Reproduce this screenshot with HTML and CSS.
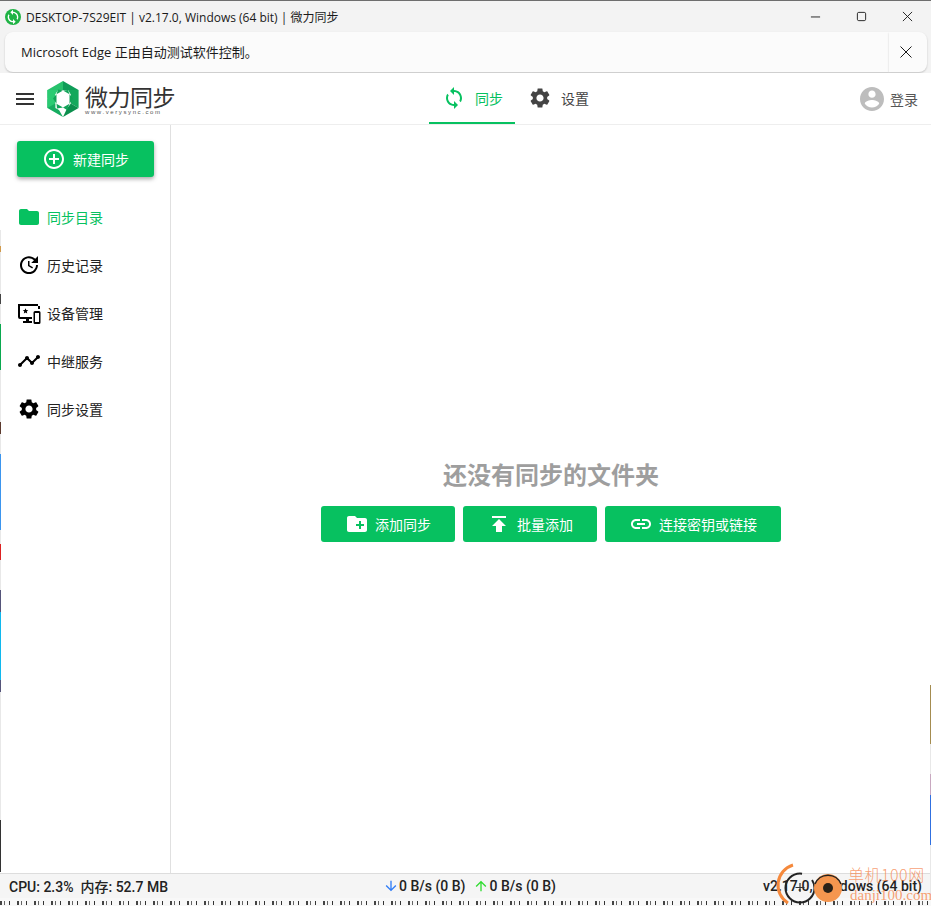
FILE: index.html
```html
<!DOCTYPE html>
<html lang="en">
<head>
    <meta charset="UTF-8">
    <title>微力同步</title>
    <link rel="stylesheet" href="styles.css">
</head>
<body>

<div class="window">
    <!-- Window title bar -->
    <div class="titlebar">
        <svg class="app-icon" viewBox="0 0 24 24"><circle cx="12" cy="12" r="12" fill="#1fb345"/><path fill="#fff" d="M12 4V1L8 5l4 4V6c3.31 0 6 2.69 6 6 0 1.01-.25 1.97-.7 2.8l1.46 1.46C19.54 15.03 20 13.57 20 12c0-4.42-3.58-8-8-8zm0 14c-3.31 0-6-2.69-6-6 0-1.01.25-1.97.7-2.8L5.24 7.74C4.46 8.97 4 10.43 4 12c0 4.42 3.58 8 8 8v3l4-4-4-4v3z"/></svg>
        <span class="title-text">DESKTOP-7S29EIT | v2.17.0, Windows (64 bit) | 微力同步</span>
        <div class="win-controls">
            <svg viewBox="0 0 12 12"><path d="M1 6.5h10" stroke="#1a1a1a" fill="none"/></svg>
            <svg viewBox="0 0 12 12"><rect x="1.5" y="1.5" width="9" height="9" rx="1.5" stroke="#1a1a1a" fill="none"/></svg>
            <svg viewBox="0 0 12 12"><path d="M1 1l10 10M11 1L1 11" stroke="#1a1a1a" fill="none"/></svg>
        </div>
    </div>

    <!-- Automation notice -->
    <div class="infobar">
        <span>Microsoft Edge 正由自动测试软件控制。</span>
        <svg class="infobar-close" viewBox="0 0 12 12"><path d="M.5.5l11 11M11.5.5l-11 11" stroke="#1a1a1a" fill="none"/></svg>
    </div>

    <!-- App header -->
    <header class="appbar">
        <svg class="menu-icon" viewBox="0 0 24 24"><path d="M3 18h18v-2H3v2zm0-5h18v-2H3v2zm0-7v2h18V6H3z"/></svg>
        <div class="logo">
            <svg class="logo-mark" viewBox="0 0 32 36">
                <path fill="#0f9d58" d="M16 0L31.6 9 16 9z"/>
                <path fill="#27c26c" d="M16 0L.4 9v9L11 9h5z"/>
                <path fill="#14a85c" d="M31.6 9v18l-7.800-4.500V13.500L21 9z"/>
                <path fill="#0b8f4d" d="M31.600 27L16 36 20 27.500l3.800-5z"/>
                <path fill="#16ad60" d="M16 36L.4 27v-9l8 4.500v4.500l3.600 2z"/>
                <path fill="#2acb72" d="M.4 9v18l7.800-4.500V13.500L11 9z"/>
                <path fill="#fff" d="M16 9.500l6.500 3.750v9.500L16 26.500l-6.500-3.750v-9.500z"/>
                <path fill="#12a358" d="M22.500 13.250L21 9l-5 .5zM22.500 22.750L26 17.500l-3.500-4.250zM16 26.500l6.500-3.750L20 29zM9.500 22.750L16 26.500l-6 1zM9.500 13.250v9.500L6 17.500zM16 9.500L9.500 13.250 11 8.500z"/>
            </svg>
            <div class="logo-text">
                <div class="logo-name">微力同步</div>
                <div class="logo-url">www.verysync.com</div>
            </div>
        </div>
        <nav class="tabs">
            <div class="tab tab-active">
                <svg viewBox="0 0 24 24"><path d="M12 4V1L8 5l4 4V6c3.31 0 6 2.69 6 6 0 1.01-.25 1.97-.7 2.8l1.46 1.46C19.54 15.03 20 13.57 20 12c0-4.42-3.58-8-8-8zm0 14c-3.31 0-6-2.69-6-6 0-1.01.25-1.97.7-2.8L5.24 7.74C4.46 8.97 4 10.43 4 12c0 4.42 3.58 8 8 8v3l4-4-4-4v3z"/></svg>
                <span>同步</span>
            </div>
            <div class="tab">
                <svg viewBox="0 0 24 24"><path d="M19.14 12.94c.04-.3.06-.61.06-.94 0-.32-.02-.64-.07-.94l2.030-1.580c.18-.14.23-.41.12-.61l-1.920-3.320c-.12-.22-.37-.29-.59-.22l-2.390.96c-.5-.38-1.030-.7-1.620-.94l-.36-2.540c-.04-.24-.24-.41-.48-.41h-3.840c-.24 0-.43.17-.47.41l-.36 2.540c-.59.24-1.130.57-1.620.94l-2.390-.96c-.22-.08-.47 0-.59.22L2.740 8.870c-.12.21-.08.47.12.61l2.030 1.580c-.05.3-.09.63-.09.94s.02.64.07.94l-2.030 1.580c-.18.14-.23.41-.12.61l1.920 3.320c.12.22.37.29.59.22l2.390-.96c.5.38 1.030.7 1.620.94l.36 2.540c.05.24.24.41.48.41h3.840c.24 0 .44-.17.47-.41l.36-2.540c.59-.24 1.130-.56 1.620-.94l2.390.96c.22.08.47 0 .59-.22l1.920-3.320c.12-.22.07-.47-.12-.61l-2.010-1.580zM12 15.600c-1.980 0-3.600-1.620-3.600-3.600s1.620-3.600 3.600-3.600 3.600 1.620 3.600 3.600-1.620 3.600-3.600 3.600z"/></svg>
                <span>设置</span>
            </div>
        </nav>
        <div class="login">
            <svg viewBox="0 0 24 24"><path d="M12 0C5.370 0 0 5.370 0 12s5.370 12 12 12 12-5.370 12-12S18.630 0 12 0zm0 3.600c2 0 3.600 1.600 3.600 3.600S14 10.800 12 10.800 8.400 9.200 8.400 7.200 10 3.600 12 3.600zm0 17c-3 0-5.650-1.540-7.200-3.860.04-2.390 4.800-3.700 7.200-3.700s7.160 1.310 7.200 3.700C17.650 19.060 15 20.600 12 20.600z"/></svg>
            <span>登录</span>
        </div>
    </header>

    <div class="content">
        <!-- Left sidebar -->
        <aside class="sidebar">
            <button class="new-sync">
                <svg viewBox="0 0 24 24"><path d="M13 7h-2v4H7v2h4v4h2v-4h4v-2h-4V7zm-1-5C6.480 2 2 6.480 2 12s4.480 10 10 10 10-4.480 10-10S17.520 2 12 2zm0 18c-4.410 0-8-3.590-8-8s3.590-8 8-8 8 3.590 8 8-3.590 8-8 8z"/></svg>
                新建同步
            </button>
            <ul class="side-menu">
                <li class="side-item side-active">
                    <svg viewBox="0 0 24 24"><path d="M10 4H4c-1.100 0-1.990.9-1.990 2L2 18c0 1.100.9 2 2 2h16c1.100 0 2-.9 2-2V8c0-1.100-.9-2-2-2h-8l-2-2z"/></svg>
                    同步目录
                </li>
                <li class="side-item">
                    <svg viewBox="0 0 24 24"><path d="M21 10.120h-6.780l2.740-2.820c-2.730-2.700-7.150-2.800-9.880-.1-2.730 2.710-2.730 7.080 0 9.790s7.150 2.710 9.880 0C18.320 15.650 19 14.080 19 12.100h2c0 1.980-.88 4.550-2.640 6.290-3.510 3.480-9.210 3.480-12.720 0-3.500-3.470-3.530-9.110-.02-12.580s9.140-3.470 12.650 0L21 3v7.120zM12.500 8v4.250l3.500 2.080-.72 1.210L11 13V8h1.500z"/></svg>
                    历史记录
                </li>
                <li class="side-item">
                    <svg viewBox="0 0 24 24"><path d="M1 3h20v2H3v11h12v2h-3v2h3v2H6v-2h3v-2H3a2 2 0 0 1-2-2zM8.500 7.200l.8 1.900 2 .15-1.550 1.300.5 1.950-1.750-1.050-1.700 1.050.5-1.950-1.550-1.300 2-.15z"/><path fill-rule="evenodd" d="M18 10h4a1.500 1.500 0 0 1 1.500 1.500v10A1.500 1.500 0 0 1 22 23h-4a1.500 1.500 0 0 1-1.500-1.500v-10A1.500 1.500 0 0 1 18 10zm0 2v9h4v-9z"/><path d="M21 5h2v3h-2z"/></svg>
                    设备管理
                </li>
                <li class="side-item">
                    <svg viewBox="0 0 24 24"><path d="M23 8c0 1.100-.9 2-2 2-.18 0-.35-.02-.51-.07l-3.560 3.550c.05.16.07.34.07.52 0 1.100-.9 2-2 2s-2-.9-2-2c0-.18.02-.36.07-.52l-2.550-2.550c-.16.05-.34.07-.52.07s-.36-.02-.52-.07l-4.550 4.560c.05.16.07.33.07.51 0 1.100-.9 2-2 2s-2-.9-2-2 .9-2 2-2c.18 0 .35.02.51.07l4.560-4.550C8.020 9.360 8 9.180 8 9c0-1.100.9-2 2-2s2 .9 2 2c0 .18-.02.36-.07.52l2.550 2.550c.16-.05.34-.07.52-.07s.36.02.52.07l3.550-3.560C19.020 8.350 19 8.180 19 8c0-1.100.9-2 2-2s2 .9 2 2z"/></svg>
                    中继服务
                </li>
                <li class="side-item">
                    <svg viewBox="0 0 24 24"><path d="M19.140 12.940c.04-.3.06-.61.06-.94 0-.32-.02-.64-.07-.94l2.030-1.580c.18-.14.23-.41.12-.61l-1.920-3.320c-.12-.22-.37-.29-.59-.22l-2.390.96c-.5-.38-1.030-.7-1.620-.94l-.36-2.540c-.04-.24-.24-.41-.48-.41h-3.840c-.24 0-.43.17-.47.41l-.36 2.540c-.59.24-1.130.57-1.620.94l-2.390-.96c-.22-.08-.47 0-.59.22L2.740 8.870c-.12.21-.08.47.12.61l2.030 1.580c-.05.3-.09.63-.09.94s.02.64.07.94l-2.030 1.580c-.18.14-.23.41-.12.61l1.920 3.320c.12.22.37.29.59.22l2.390-.96c.5.38 1.030.7 1.620.94l.36 2.540c.05.24.24.41.48.41h3.840c.24 0 .44-.17.47-.41l.36-2.540c.59-.24 1.130-.56 1.620-.94l2.390.96c.22.08.47 0 .59-.22l1.920-3.320c.12-.22.07-.47-.12-.61l-2.010-1.580zM12 15.600c-1.980 0-3.600-1.620-3.600-3.600s1.620-3.600 3.600-3.600 3.600 1.620 3.600 3.600-1.620 3.600-3.600 3.600z"/></svg>
                    同步设置
                </li>
            </ul>
        </aside>

        <!-- Empty state -->
        <main class="main">
            <h2 class="empty-title">还没有同步的文件夹</h2>
            <div class="empty-actions">
                <button class="action-btn btn-add">
                    <svg viewBox="0 0 24 24"><path d="M20 6h-8l-2-2H4c-1.110 0-1.990.89-1.990 2L2 18c0 1.110.89 2 2 2h16c1.110 0 2-.89 2-2V8c0-1.110-.89-2-2-2zm-1 8h-3v3h-2v-3h-3v-2h3V9h2v3h3v2z"/></svg>
                    添加同步
                </button>
                <button class="action-btn btn-batch">
                    <svg viewBox="0 0 24 24"><path d="M5 4v2h14V4H5zm0 10h4v6h6v-6h4l-7-7-7 7z"/></svg>
                    批量添加
                </button>
                <button class="action-btn btn-link">
                    <svg viewBox="0 0 24 24"><path d="M3.900 12c0-1.710 1.390-3.100 3.100-3.100h4V7H7c-2.760 0-5 2.240-5 5s2.240 5 5 5h4v-1.900H7c-1.710 0-3.100-1.390-3.100-3.100zM8 13h8v-2H8v2zm9-6h-4v1.900h4c1.710 0 3.100 1.390 3.100 3.100s-1.390 3.100-3.100 3.100h-4V17h4c2.760 0 5-2.240 5-5s-2.240-5-5-5z"/></svg>
                    连接密钥或链接
                </button>
            </div>
        </main>
    </div>

    <!-- Status bar -->
    <footer class="statusbar">
        <div class="status-left">CPU: 2.3%&nbsp; 内存: 52.7 MB</div>
        <div class="status-center">
            <svg class="arrow-down" viewBox="0 0 24 24"><path d="M20 12l-1.410-1.410L13 16.170V4h-2v12.170l-5.580-5.590L4 12l8 8 8-8z"/></svg>
            <span>0 B/s (0 B)</span>
            <svg class="arrow-up" viewBox="0 0 24 24"><path d="M4 12l1.410 1.410L11 7.830V20h2V7.830l5.580 5.590L20 12l-8-8-8 8z"/></svg>
            <span>0 B/s (0 B)</span>
        </div>
        <div class="status-right">v2.17.0, Windows (64 bit)</div>
    </footer>

    <!-- Bit of the desktop showing under the window -->
    <div class="desktop-strip"></div>
</div>

<!-- Edge of the desktop behind the window -->
<div class="edge-left"></div>
<div class="edge-right"></div>

<!-- Recorder buttons and site watermark on top of the screenshot -->
<div class="recorder">
    <svg viewBox="0 0 80 46" width="80" height="46">
        <path d="M18 5a21 21 0 0 0-5 38" fill="none" stroke="#f5893c" stroke-width="3"/>
        <circle cx="25" cy="28" r="14.500" fill="none" stroke="#222" stroke-width="2" stroke-dasharray="70 12"/>
        <path d="M25 23v9M20.500 27.500h9" stroke="#333" stroke-width="1.200"/>
        <circle cx="53" cy="28" r="14" fill="#f5964f"/>
        <path d="M40 24a14 14 0 0 1 26 0" fill="none" stroke="#222" stroke-width="1.500"/>
        <circle cx="53" cy="28" r="5" fill="#2a2118"/>
    </svg>
</div>
<div class="watermark">
    <div class="wm-name">单机100网</div>
    <div class="wm-url">danji100.com</div>
</div>

</body>
</html>
```

FILE: styles.css
```css
* {
    box-sizing: border-box;
}

html, body {
    margin: 0;
    padding: 0;
    height: 906px;
    overflow: hidden;
}

body {
    font-family: "Noto Sans CJK SC", Roboto, sans-serif;
    background-color: #fff;
    color: #333;
    position: relative;
}

.window {
    height: 906px;
    display: flex;
    flex-direction: column;
    border-top: 1px solid #6e6e6e;
}

/* title bar */
.titlebar {
    height: 31px;
    flex: none;
    background-color: #f3f3f3;
    display: flex;
    align-items: center;
    padding-left: 5px;
    font-family: "Open Sans", "Noto Sans CJK SC", sans-serif;
    font-size: 12px;
    color: #1a1a1a;
}

.app-icon {
    width: 16px;
    height: 16px;
    margin-right: 5px;
}

.win-controls {
    margin-left: auto;
    display: flex;
    gap: 35px;
    padding-right: 18px;
}

.win-controls svg {
    width: 11px;
    height: 11px;
    display: block;
}

/* automation notice */
.infobar {
    height: 41px;
    flex: none;
    background-color: #f3f3f3;
    padding: 0 4px 1px 5px;
    display: flex;
    font-family: "Open Sans", "Noto Sans CJK SC", sans-serif;
    font-size: 13px;
    color: #1a1a1a;
}

.infobar span {
    flex: 1;
    background-color: #fbfbfb;
    border-radius: 8px 0 0 8px;
    box-shadow: 0 1px 2px rgba(0, 0, 0, 0.2);
    line-height: 40px;
    padding-left: 16px;
}

.infobar-close {
    width: 34px;
    height: 40px;
    padding: 14px 11px 14px 11px;
    background-color: #fbfbfb;
    box-shadow: 0 1px 2px rgba(0, 0, 0, 0.2);
    border-radius: 0 8px 8px 0;
    box-sizing: border-box;
    width: 38px;
    padding: 14px 15px 14px 11px;
}

/* app header */
.appbar {
    height: 52px;
    flex: none;
    display: flex;
    align-items: center;
    position: relative;
    background-color: #fff;
    border-bottom: 1px solid #eee;
    padding-left: 13px;
}

.menu-icon {
    width: 24px;
    height: 24px;
    fill: #333;
}

.logo {
    display: flex;
    align-items: center;
    margin-left: 10px;
}

.logo-mark {
    width: 32px;
    height: 36px;
}

.logo-text {
    margin-left: 6px;
    color: #333;
}

.logo-name {
    font-size: 23px;
    line-height: 26px;
    letter-spacing: -0.5px;
}

.logo-url {
    font-size: 6px;
    line-height: 6px;
    letter-spacing: 1.6px;
    color: #555;
    font-family: "Liberation Sans", sans-serif;
    white-space: nowrap;
}

.tabs {
    display: flex;
    height: 51px;
    margin-left: 254px;
}

.tab {
    display: flex;
    align-items: center;
    padding: 0 12px 0 13px;
    font-size: 14px;
    color: #444;
    gap: 9px;
    border-bottom: 2px solid transparent;
}

.tab svg {
    width: 24px;
    height: 24px;
    fill: #444;
}

.tab-active {
    color: #07c160;
    border-bottom-color: #07c160;
}

.tab-active svg {
    fill: #07c160;
}

.login {
    margin-left: auto;
    padding-right: 13px;
    display: flex;
    align-items: center;
    gap: 6px;
    font-size: 14px;
    color: #555;
}

.login svg {
    width: 24px;
    height: 24px;
    fill: #bdbdbd;
}

/* sidebar + main */
.content {
    height: 748px;
    flex: none;
    display: flex;
}

.sidebar {
    width: 171px;
    flex: none;
    border-right: 1px solid #e0e0e0;
    padding-top: 16px;
}

.new-sync {
    width: 137px;
    height: 36px;
    margin-left: 17px;
    display: flex;
    align-items: center;
    justify-content: center;
    gap: 7px;
    background-color: #07c160;
    color: #fff;
    border: none;
    border-radius: 3px;
    box-shadow: 0 2px 4px rgba(0, 0, 0, 0.35);
    font-family: inherit;
    font-size: 14px;
    padding: 0;
}

.new-sync svg {
    width: 24px;
    height: 24px;
    fill: #fff;
}

.side-menu {
    list-style: none;
    margin: 16px 0 0;
    padding: 0;
}

.side-item {
    height: 48px;
    display: flex;
    align-items: center;
    padding-left: 17px;
    gap: 6px;
    font-size: 14px;
    color: #222;
}

.side-item svg {
    width: 24px;
    height: 24px;
    fill: #000;
}

.side-active {
    color: #07c160;
}

.side-active svg {
    fill: #07c160;
}

.main {
    flex: 1;
    display: flex;
    flex-direction: column;
    align-items: center;
    justify-content: center;
}

.empty-title {
    margin: 0 0 15px;
    font-size: 24px;
    line-height: 35px;
    font-weight: 700;
    color: #9e9e9e;
}

.empty-actions {
    display: flex;
    gap: 8px;
}

.action-btn {
    height: 36px;
    display: flex;
    align-items: center;
    justify-content: center;
    gap: 6px;
    background-color: #07c160;
    color: #fff;
    border: none;
    border-radius: 3px;
    font-family: inherit;
    font-size: 14px;
    padding: 0;
}

.action-btn svg {
    width: 24px;
    height: 24px;
    fill: #fff;
}

.btn-add, .btn-batch {
    width: 134px;
}

.btn-link {
    width: 176px;
}

/* status bar */
.statusbar {
    height: 25px;
    flex: none;
    position: relative;
    display: flex;
    align-items: center;
    justify-content: space-between;
    background-color: #f5f5f5;
    border-top: 1px solid #ddd;
    padding: 0 9px;
    font-family: Roboto, "Noto Sans CJK SC", sans-serif;
    font-size: 14px;
    font-weight: 500;
    color: #222;
}

.status-center {
    display: flex;
    align-items: center;
    position: absolute;
    left: 383px;
}

.status-center svg {
    width: 16px;
    height: 16px;
}

.status-center span + svg {
    margin-left: 8px;
}

.arrow-down {
    fill: #2f7cf6;
}

.arrow-up {
    fill: #2fdc2f;
}

.desktop-strip {
    flex: 1;
    background:
        repeating-linear-gradient(90deg, #444 0 2px, transparent 2px 4px, #666 4px 5px, transparent 5px 9px, #333 9px 10px, transparent 10px 17px) 0 3px / 100% 4px no-repeat,
        #f8f8f8;
}

/* 1px edges of what is behind the window */
.edge-left {
    position: absolute;
    left: 0;
    top: 230px;
    width: 1px;
    height: 676px;
    background: linear-gradient(180deg,
        #e8e8e8 0 16px, #d19a4c 16px 22px, #e8e8e8 22px 64px, #444 64px 74px, #e8e8e8 74px 94px,
        #0aa84f 94px 140px, #e8e8e8 140px 192px, #5c3a2e 192px 204px, #e8e8e8 204px 224px,
        #3b95ee 224px 300px, #e8e8e8 300px 314px, #d22 314px 330px, #e8e8e8 330px 360px,
        #55557a 360px 382px, #10b8ee 382px 450px, #55557a 450px 462px, #e8e8e8 462px 590px,
        #333 590px 642px, transparent 642px);
}

.edge-right {
    position: absolute;
    right: 0;
    top: 685px;
    width: 1px;
    height: 210px;
    background: linear-gradient(180deg,
        #a48c50 0 59px, #e8e8e8 59px 89px, #c8a8c0 89px 110px, #3070e0 110px 160px, #e8e8e8 160px);
}

/* overlays */
.recorder {
    position: absolute;
    left: 775px;
    top: 860px;
    height: 46px;
}

.watermark {
    position: absolute;
    left: 848px;
    top: 864px;
    color: rgba(245, 130, 70, 0.75);
    font-family: "Noto Sans CJK SC", sans-serif;
    white-space: nowrap;
}

.wm-name {
    font-size: 16px;
    line-height: 21px;
    font-weight: 300;
    letter-spacing: 0.5px;
}

.wm-url {
    font-family: "Liberation Serif", serif;
    font-size: 15px;
    line-height: 18px;
    margin-left: 2px;
    margin-top: 1px;
}
```
